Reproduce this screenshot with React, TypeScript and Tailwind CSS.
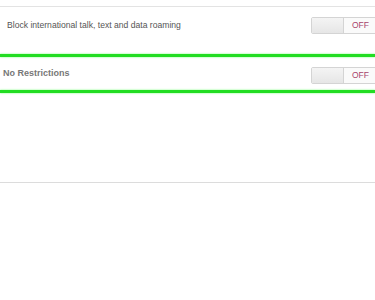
import React from "react";

function Toggle() {
  return (
    <div className="flex h-[17px] w-[70px] shrink-0 overflow-hidden rounded-[2px] border border-[#d4d4d4]">
      <div className="w-[32px] border-r border-[#d4d4d4] bg-gradient-to-b from-[#f4f4f4] to-[#e6e6e6]" />
      <div className="flex flex-1 items-center bg-[#fafafa] pl-[8px] text-[8.5px] leading-none text-[#a8446c]">
        OFF
      </div>
    </div>
  );
}

export default function App() {
  return (
    <div
      className="relative h-[300px] w-[375px] overflow-hidden bg-white"
      style={{ fontFamily: '"Liberation Sans", Arial, sans-serif' }}
    >
      <div className="pt-[6px]">
        <div className="h-[48px] border-t border-[#e3e3e3] pt-[10px]">
          <div className="flex h-[17px] items-center justify-between pl-[7px]">
            <span className="text-[8.6px] text-[#555]">Block international talk, text and data roaming</span>
            <div className="mr-[-6px]">
              <Toggle />
            </div>
          </div>
        </div>
        <div className="h-[3px] bg-[#22dd22] shadow-[0_0_2px_#6f6]" />
        <div className="h-[33px] pt-[10px]">
          <div className="flex h-[17px] items-center justify-between pl-[3px]">
            <span className="-mt-[4px] text-[9px] font-bold text-[#777]">No Restrictions</span>
            <div className="mr-[-6px]">
              <Toggle />
            </div>
          </div>
        </div>
        <div className="h-[3px] bg-[#22dd22] shadow-[0_0_2px_#6f6]" />
        <div className="h-[90px] border-b border-[#dcdcdc]" />
      </div>
    </div>
  );
}
